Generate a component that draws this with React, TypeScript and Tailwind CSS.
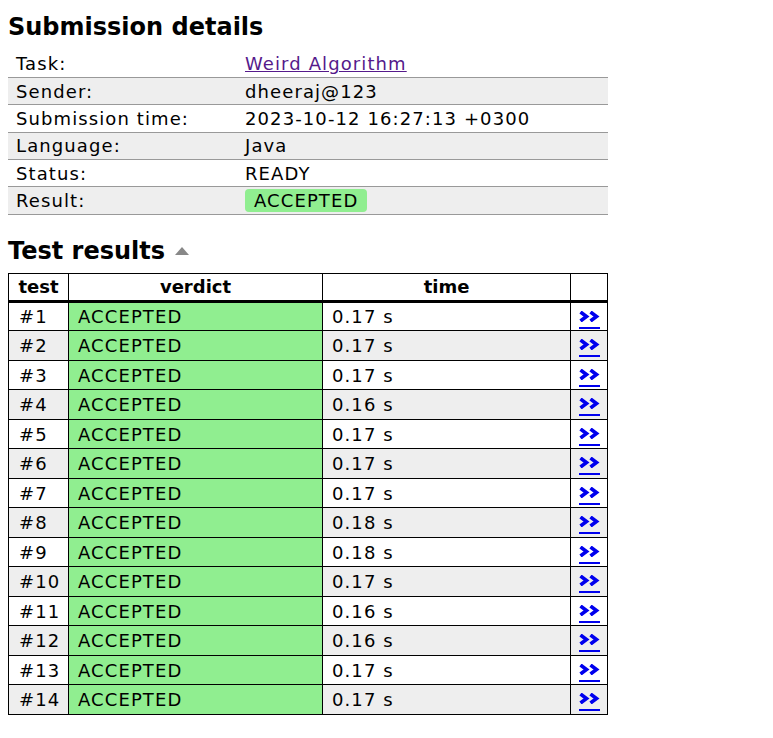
const details = [
  { k: "Task:", v: "task" },
  { k: "Sender:", v: "dheeraj@123" },
  { k: "Submission time:", v: "2023-10-12 16:27:13 +0300" },
  { k: "Language:", v: "Java" },
  { k: "Status:", v: "READY" },
  { k: "Result:", v: "result" },
];

const times = ["0.17", "0.17", "0.17", "0.16", "0.17", "0.17", "0.17", "0.18", "0.18", "0.17", "0.16", "0.16", "0.17", "0.17"];

function Chevrons() {
  return (
    <a href="#" className="flex flex-col items-center">
      <svg width="21" height="11" viewBox="0 0 21 11" className="block">
        <path d="M1.5 1 L7.5 5.5 L1.5 10" fill="none" stroke="#0000ee" strokeWidth="3.6" />
        <path d="M11.5 1 L17.5 5.5 L11.5 10" fill="none" stroke="#0000ee" strokeWidth="3.6" />
      </svg>
      <span className="mt-[5px] block h-[2px] w-[21px] bg-[#0000ee]"></span>
    </a>
  );
}

export default function App() {
  return (
    <div className="min-h-[738px] bg-white px-2 pt-[12px] text-[18px] tracking-[1.1px] text-black font-['DejaVu_Sans',Verdana,sans-serif]">
      <h2 className="text-[24px] font-bold leading-[30px] tracking-normal">Submission details</h2>

      <table className="mt-[8px] w-[600px] border-collapse">
        <tbody>
          {details.map((d, i) => (
            <tr key={d.k} className={`h-[27.4px] ${i > 0 ? "border-t" : ""} ${i === details.length - 1 ? "border-b" : ""} border-[#999] ${i % 2 === 1 ? "bg-[#eee]" : ""}`}>
              <td className="w-[237px] py-0 pl-2 leading-[21px]">{d.k}</td>
              <td className="py-0 leading-[21px]">
                {d.v === "task" ? (
                  <a href="#" className="text-[#551a8b] underline">Weird Algorithm</a>
                ) : d.v === "result" ? (
                  <span className="inline-block rounded-[4px] bg-[#90ee90] px-[9px] leading-[23px]">ACCEPTED</span>
                ) : (
                  d.v
                )}
              </td>
            </tr>
          ))}
        </tbody>
      </table>

      <h2 className="mt-[21px] flex items-center gap-[10px] text-[24px] font-bold leading-[30px] tracking-normal">
        Test results
        <svg width="14" height="8" viewBox="0 0 14 8">
          <path d="M0 8 L7 0 L14 8 Z" fill="#888" />
        </svg>
      </h2>

      <table className="mt-[7px] w-[600px] border-collapse border border-black">
        <thead>
          <tr className="h-[28px] border-b-[3px] border-black">
            <th className="w-[60px] border border-black leading-[21px] tracking-normal">test</th>
            <th className="w-[254px] border border-black leading-[21px] tracking-normal">verdict</th>
            <th className="w-[248px] border border-black leading-[21px] tracking-normal">time</th>
            <th className="border border-black"></th>
          </tr>
        </thead>
        <tbody>
          {times.map((t, i) => (
            <tr key={i} className={`h-[29.5px] ${i % 2 === 1 ? "bg-[#eee]" : ""}`}>
              <td className="border border-black py-0 pl-[10px] leading-[21px]">#{i + 1}</td>
              <td className="border border-black bg-[#90ee90] py-0 pl-[9px] leading-[21px]">ACCEPTED</td>
              <td className="border border-black py-0 pl-[9px] leading-[21px]">{t} s</td>
              <td className="border border-black p-0 align-top">
                <div className="pt-[8px]">
                  <Chevrons />
                </div>
              </td>
            </tr>
          ))}
        </tbody>
      </table>
    </div>
  );
}
